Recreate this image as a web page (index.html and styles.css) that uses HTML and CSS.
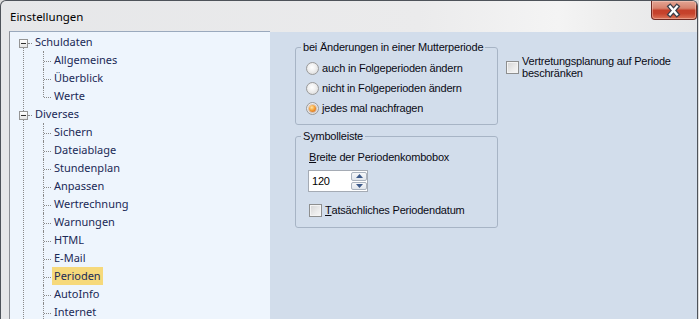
FILE: index.html
```html
<!DOCTYPE html>
<html lang="de">
<head>
<meta charset="utf-8">
<title>Einstellungen</title>
<link rel="stylesheet" href="styles.css">
</head>
<body>
<div class="window">
  <div class="titlebar">
    <span class="title">Einstellungen</span>
    <button class="close" type="button" aria-label="Schließen">
      <svg width="46" height="19" viewBox="0 0 46 19">
        <path d="M19.5 5.5 L26.5 13.5 M26.5 5.5 L19.5 13.5" stroke="#3b3f4a" stroke-width="5" stroke-linecap="square" fill="none"/>
        <path d="M19.5 5.5 L26.5 13.5 M26.5 5.5 L19.5 13.5" stroke="#ffffff" stroke-width="2.4" stroke-linecap="square" fill="none"/>
      </svg>
    </button>
  </div>
  <div class="client">
    <div class="tree-pane">
      <ul class="tree">
        <li class="root">
          <div class="row"><span class="toggle"></span><span class="label">Schuldaten</span></div>
          <ul class="children">
            <li class="leaf"><span class="label">Allgemeines</span></li>
            <li class="leaf"><span class="label">Überblick</span></li>
            <li class="leaf"><span class="label">Werte</span></li>
          </ul>
        </li>
        <li class="root">
          <div class="row"><span class="toggle"></span><span class="label">Diverses</span></div>
          <ul class="children continues">
            <li class="leaf"><span class="label">Sichern</span></li>
            <li class="leaf"><span class="label">Dateiablage</span></li>
            <li class="leaf"><span class="label">Stundenplan</span></li>
            <li class="leaf"><span class="label">Anpassen</span></li>
            <li class="leaf"><span class="label">Wertrechnung</span></li>
            <li class="leaf"><span class="label">Warnungen</span></li>
            <li class="leaf"><span class="label">HTML</span></li>
            <li class="leaf"><span class="label">E-Mail</span></li>
            <li class="leaf"><span class="label selected">Perioden</span></li>
            <li class="leaf"><span class="label">AutoInfo</span></li>
            <li class="leaf"><span class="label">Internet</span></li>
          </ul>
        </li>
      </ul>
    </div>
    <div class="settings">
      <div class="groups">
        <fieldset class="group">
          <legend>bei Änderungen in einer Mutterperiode</legend>
          <div class="radios">
            <label class="option"><span class="radio"></span>auch in Folgeperioden ändern</label>
            <label class="option"><span class="radio"></span>nicht in Folgeperioden ändern</label>
            <label class="option"><span class="radio checked"></span>jedes mal nachfragen</label>
          </div>
        </fieldset>
        <fieldset class="group group-toolbar">
          <legend>Symbolleiste</legend>
          <div class="toolbar-body">
            <div class="field-label"><u>B</u>reite der Periodenkombobox</div>
            <div class="spin">
              <span class="spin-value">120</span>
              <span class="spin-buttons">
                <span class="spin-btn up"><svg width="7" height="4" viewBox="0 0 7 4"><path d="M0 4 L3.5 0 L7 4 Z" fill="#3d5a8a"/></svg></span>
                <span class="spin-btn down"><svg width="7" height="4" viewBox="0 0 7 4"><path d="M0 0 L3.5 4 L7 0 Z" fill="#3d5a8a"/></svg></span>
              </span>
            </div>
            <label class="check-row"><span class="checkbox"></span><u>T</u>atsächliches Periodendatum</label>
          </div>
        </fieldset>
      </div>
      <label class="side-check"><span class="checkbox"></span><span class="side-text">Vertretungsplanung auf Periode<br>beschränken</span></label>
    </div>
  </div>
</div>
</body>
</html>
```
FILE: styles.css
```css
html, body {
  margin: 0;
  padding: 0;
  height: 100%;
  overflow: hidden;
}

body {
  background: #dcdcdc;
}

.window {
  box-sizing: border-box;
  width: 698px;
  height: 330px;
  border: 1px solid #4e535a;
  border-bottom: none;
  border-radius: 6px 6px 0 0;
  background: linear-gradient(90deg, #e6e7e9 0%, #ebebec 60%, #f4f4f4 80%, #ededed 88%, #e6e7e9 100%);
  display: flex;
  flex-direction: column;
  overflow: hidden;
}

/* Title bar */
.titlebar {
  height: 30px;
  flex: none;
  display: flex;
  justify-content: space-between;
  align-items: flex-start;
  padding-left: 9px;
}

.title {
  margin-top: 8px;
  font-family: "Noto Sans", "Open Sans", sans-serif;
  font-size: 11.5px;
  line-height: 16px;
  color: #000;
}

.close {
  width: 46px;
  height: 19px;
  padding: 0;
  margin: 0;
  border: 1px solid #6e2a22;
  border-top: none;
  border-radius: 0 0 4px 4px;
  background: linear-gradient(180deg, #e3a594 0%, #d7826d 40%, #c4402a 52%, #c6432c 70%, #dc7458 100%);
  box-shadow: inset 0 0 0 1px rgba(255, 220, 210, 0.4);
  display: flex;
  align-items: center;
  justify-content: center;
}

.close svg {
  display: block;
  margin-left: -1px;
}

/* Client area */
.client {
  flex: 1;
  display: flex;
  padding-left: 8px;
}

.tree-pane {
  box-sizing: border-box;
  width: 261px;
  flex: none;
  border-left: 1px solid #8d9096;
  border-top: 1px solid #9aa9bd;
  background: #eef5fd;
  overflow: hidden;
}

.tree {
  list-style: none;
  margin: 0;
  padding: 1px 0 0;
  position: relative;
  font-family: "Noto Sans", "Open Sans", sans-serif;
  font-size: 11px;
  color: #1a2956;
}

.tree::before {
  content: "";
  position: absolute;
  left: 13px;
  top: 16px;
  bottom: -30px;
  border-left: 1px dotted #8a8a8a;
}

.root {
  margin: 0;
  padding: 0;
}

.row {
  position: relative;
  height: 18px;
  display: flex;
  align-items: center;
  padding-left: 23px;
}

.row::before {
  content: "";
  position: absolute;
  left: 18px;
  top: 10px;
  width: 4px;
  border-top: 1px dotted #8a8a8a;
}

.toggle {
  position: absolute;
  left: 9px;
  top: 6px;
  width: 9px;
  height: 9px;
  box-sizing: border-box;
  border: 1px solid #959595;
  background: linear-gradient(180deg, #ffffff 0%, #e4e4e4 100%);
}

.toggle::after {
  content: "";
  position: absolute;
  left: 1px;
  top: 3px;
  width: 5px;
  height: 1px;
  background: #2f2f2f;
}

.label {
  display: inline-flex;
  align-items: center;
  height: 18px;
  padding: 0 2px;
  line-height: 18px;
  white-space: nowrap;
}

.label.selected {
  background: #f6d97b;
}

.children {
  list-style: none;
  margin: 0;
  padding: 0;
}

.leaf {
  position: relative;
  height: 18px;
  display: flex;
  align-items: center;
  padding-left: 42px;
}

.leaf::before {
  content: "";
  position: absolute;
  left: 33px;
  top: 0;
  height: 18px;
  border-left: 1px dotted #8a8a8a;
}

.leaf:last-child::before {
  height: 10px;
}

.continues .leaf:last-child::before {
  height: 18px;
}

.leaf::after {
  content: "";
  position: absolute;
  left: 34px;
  top: 10px;
  width: 7px;
  border-top: 1px dotted #8a8a8a;
}

/* Settings page */
.settings {
  flex: 1;
  margin-top: 1px;
  background: #d2ddeb;
  display: flex;
  align-items: flex-start;
  padding: 9px 0 0 25px;
  font-family: "Liberation Sans", Arial, sans-serif;
  font-size: 11px;
  letter-spacing: -0.2px;
  color: #0a0a14;
}

.groups {
  width: 203px;
  flex: none;
  display: flex;
  flex-direction: column;
}

.group {
  margin: 0;
  padding: 0;
  border: 1px solid #a7b4c5;
  border-radius: 3px;
  min-width: 0;
}

.group legend {
  margin-left: 5px;
  padding: 0 2px;
  line-height: 13px;
}

.group-toolbar {
  margin-top: 5px;
}

.radios {
  padding: 4px 0 6px 10px;
}

.option {
  height: 20px;
  display: flex;
  align-items: center;
  line-height: 13px;
}

.radio {
  width: 13px;
  height: 13px;
  box-sizing: border-box;
  border-radius: 50%;
  border: 1px solid #9a9a9a;
  background: radial-gradient(circle at 45% 40%, #ffffff 0%, #f1f1f1 40%, #d4d4d4 100%);
  margin-right: 3px;
  flex: none;
  display: flex;
  align-items: center;
  justify-content: center;
}

.radio.checked::after {
  content: "";
  width: 7px;
  height: 7px;
  border-radius: 50%;
  background: radial-gradient(circle at 40% 35%, #ffe6a8 0%, #f5a33a 45%, #c9560e 100%);
  box-shadow: 0 0 0 1px rgba(150, 70, 10, 0.25);
}

.toolbar-body {
  padding: 8px 0 10px 13px;
}

.field-label {
  line-height: 13px;
}

.spin {
  margin: 6px 0 0 -1px;
  width: 60px;
  height: 22px;
  box-sizing: border-box;
  border: 1px solid #a5abb4;
  background: #fff;
  display: flex;
  align-items: stretch;
}

.spin-value {
  flex: 1;
  padding-left: 3px;
  display: flex;
  align-items: center;
  font-size: 11px;
  color: #000;
}

.spin-buttons {
  width: 16px;
  display: flex;
  flex-direction: column;
  gap: 1px;
  padding: 1px 0 1px;
}

.spin-btn {
  flex: 1;
  box-sizing: border-box;
  border: 1px solid #aab3bf;
  border-radius: 2px;
  background: linear-gradient(180deg, #f6f7f9 0%, #e1e6ec 100%);
  display: flex;
  align-items: center;
  justify-content: center;
}

.spin-btn svg {
  display: block;
}

.check-row {
  margin-top: 11px;
  height: 14px;
  display: flex;
  align-items: center;
  line-height: 13px;
}

.checkbox {
  width: 13px;
  height: 13px;
  box-sizing: border-box;
  border: 1px solid #8e8f8f;
  background: linear-gradient(135deg, #d4d4d4 0%, #ececec 60%, #f7f7f7 100%);
  box-shadow: inset 0 0 0 1px #f4f4f4;
  margin-right: 3px;
  flex: none;
}

.side-check {
  margin: 14px 0 0 8px;
  display: flex;
  align-items: center;
}

.side-text {
  line-height: 12px;
}
```
